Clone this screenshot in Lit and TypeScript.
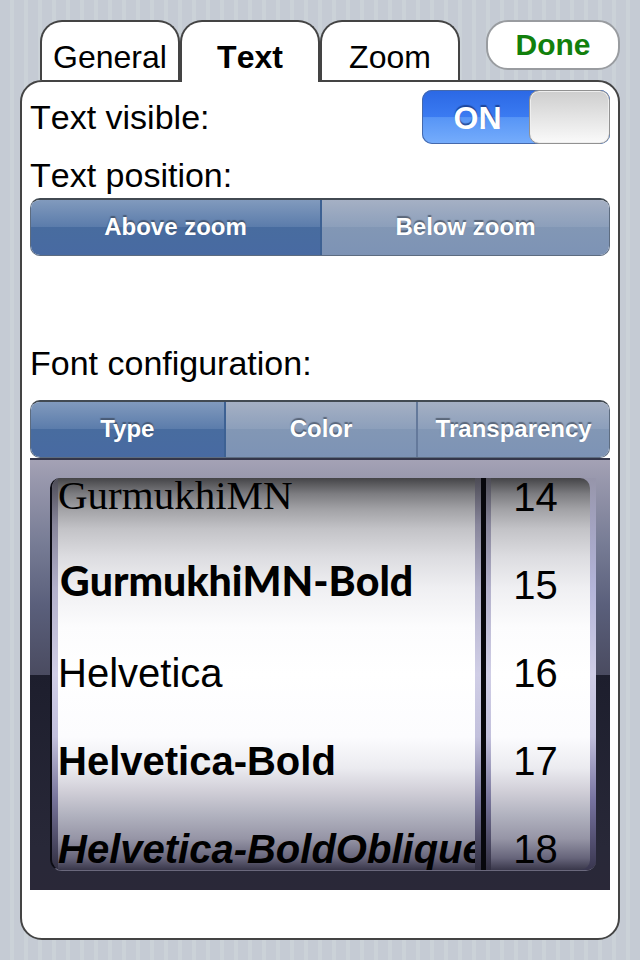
import { LitElement, html, css } from "lit";
import { customElement, state } from "lit/decorators.js";
import { classMap } from "lit/directives/class-map.js";

interface FontChoice {
  name: string;
  face: string;
}

const FONTS: FontChoice[] = [
  { name: "GurmukhiMN", face: "serif" },
  { name: "GurmukhiMN-Bold", face: "humanist" },
  { name: "Helvetica", face: "plain" },
  { name: "Helvetica-Bold", face: "bold" },
  { name: "Helvetica-BoldOblique", face: "oblique" },
];

const SIZES = [14, 15, 16, 17, 18];

@customElement("segmented-control")
class SegmentedControl extends LitElement {
  static properties = {
    label: {},
    options: { attribute: false },
    selected: { type: Number },
  };
  declare label: string;
  declare options: string[];
  declare selected: number;

  constructor() {
    super();
    this.label = "";
    this.options = [];
    this.selected = 0;
  }

  static styles = css`
    :host {
      display: block;
    }
    .bar {
      display: grid;
      grid-auto-flow: column;
      grid-auto-columns: minmax(0, 1fr);
      height: 58px;
      box-sizing: border-box;
      border: 1px solid #5d6c80;
      border-top: 2px solid #424a52;
      border-radius: 10px;
      overflow: hidden;
    }
    .segment {
      border: 0;
      border-left: 2px solid #64799b;
      margin: 0;
      padding: 0 0 2px;
      background: linear-gradient(#a5b0c4, #8c9fbb 49%, #8297b5 50%, #7d93b5);
      color: #fff;
      font: bold 24px "Liberation Sans", Arial, sans-serif;
      text-shadow: 0 -2px 1px rgba(50, 60, 75, 0.6);
    }
    .segment:first-child {
      border-left: 0;
    }
    .segment.on {
      background: linear-gradient(#819abd, #5b7cab 49%, #486c9f 50%, #486aa2);
    }
    .segment.on + .segment {
      border-left-color: #3d6193;
    }
  `;

  render() {
    return html`<div class="bar" role="group" aria-label=${this.label}>
      ${this.options.map(
        (text, i) => html`<button
          class=${classMap({ segment: true, on: i === this.selected })}
          aria-pressed=${i === this.selected}
          @click=${() => (this.selected = i)}
        >${text}</button>`
      )}
    </div>`;
  }
}

@customElement("app-root")
class AppRoot extends LitElement {
  @state() tab = "Text";
  @state() visible = true;

  static styles = css`
    :host {
      display: block;
      font-family: "Liberation Sans", Arial, sans-serif;
      color: #000;
    }
    .page {
      display: flex;
      flex-direction: column;
      box-sizing: border-box;
      min-height: 100vh;
      padding: 20px;
      background: repeating-linear-gradient(
        90deg,
        #c5cbd4 0 10px,
        #cbd2d8 10px 14px
      );
    }
    .header {
      display: flex;
      justify-content: space-between;
      align-items: flex-start;
      padding-left: 20px;
    }
    .tabs {
      display: flex;
    }
    .tab {
      width: 140px;
      height: 60px;
      box-sizing: border-box;
      margin: 0;
      padding: 12px 0 0;
      border: 2px solid #444;
      border-bottom: 0;
      border-radius: 22px 22px 0 0;
      background: #fff;
      color: #000;
      font: 32px "Liberation Sans", Arial, sans-serif;
      font-kerning: none;
    }
    .tab.active {
      position: relative;
      z-index: 1;
      height: 62px;
      margin-bottom: -2px;
      padding-bottom: 2px;
      font-weight: bold;
    }
    .done {
      width: 134px;
      height: 50px;
      box-sizing: border-box;
      padding: 0;
      border: 2px solid #999ca0;
      border-radius: 22px;
      background: #fff;
      color: #12800c;
      font: bold 30px "Liberation Sans", Arial, sans-serif;
    }
    .panel {
      flex: 1;
      box-sizing: border-box;
      padding: 8px;
      border: 2px solid #444;
      border-radius: 22px;
      background: #fff;
      font-kerning: none;
    }
    .row {
      display: flex;
      justify-content: space-between;
      align-items: center;
      margin-bottom: 8px;
      font-size: 34px;
    }
    .caption {
      margin: 0;
      font-size: 34px;
      font-weight: normal;
      line-height: 46px;
    }
    .caption.spaced {
      margin-top: 84px;
      margin-bottom: 14px;
    }
    .switch {
      position: relative;
      display: flex;
      width: 188px;
      height: 54px;
      border-radius: 10px;
      overflow: hidden;
      background: linear-gradient(#2b68e4, #3b7bf2 50%, #5795f6 51%, #76adfc);
      box-shadow: inset 0 0 0 1px #4569ac;
    }
    .switch input {
      position: absolute;
      inset: 0;
      width: 100%;
      height: 100%;
      margin: 0;
      opacity: 0;
    }
    .state {
      flex: 1;
      padding-left: 4px;
      color: #fff;
      font-size: 32px;
      font-weight: bold;
      line-height: 56px;
      text-align: center;
      text-shadow: 0 -2px 1px rgba(20, 50, 120, 0.7);
    }
    .thumb {
      width: 81px;
      box-sizing: border-box;
      border: 1px solid #929292;
      border-radius: 10px;
      background: linear-gradient(#cecece, #fafafa);
      box-shadow: inset 0 0 0 1px #eee;
    }
    .switch.off {
      flex-direction: row-reverse;
      background: #eee;
    }
    .picker {
      padding: 18px 14px 19px 20px;
      border-top: 2px solid #34364a;
      background: linear-gradient(
        #a4a2b5 0,
        #9797ac 5%,
        #767b94 20%,
        #5a5f7b 34%,
        #4a4b60 50%,
        #1d1e2d 50%,
        #282838 90%,
        #2a2838 100%
      );
    }
    .window {
      display: flex;
      height: 392px;
      border-left: 2px solid #0c0c14;
      border-bottom: 1px solid #6a687c;
      border-radius: 10px 0 10px 12px;
      overflow: hidden;
    }
    .reel {
      box-sizing: border-box;
      margin: 0;
      padding: 0 6px;
      border: 0;
      min-width: 0;
      background: linear-gradient(
        #4c4b55 0,
        #88869b 12%,
        #b3b1cb 28%,
        #d0cee6 50%,
        #c2c0dc 66%,
        #77749a 82%,
        #302e40 100%
      );
    }
    .reel.names {
      flex: 1;
    }
    .reel.sizes {
      width: 110px;
      padding-left: 5px;
      background:
        linear-gradient(
            #9695aa 0,
            #a3a3c0 12%,
            #b4b5da 28%,
            #cfcde6 50%,
            #c0bedc 66%,
            #7773a0 82%,
            #39364f 100%
          )
          right / 20px 100% no-repeat,
        linear-gradient(
          #4c4b55 0,
          #88869b 12%,
          #b3b1cb 28%,
          #d0cee6 50%,
          #c2c0dc 66%,
          #77749a 82%,
          #302e40 100%
        );
    }
    .divider {
      width: 5px;
      background: #07070c;
    }
    .drum {
      display: flex;
      flex-direction: column;
      gap: 50px;
      height: 392px;
      overflow: hidden;
      background: linear-gradient(
        #444447 0,
        #7c7c80 4%,
        #a2a2a6 8%,
        #c3c3c7 13%,
        #dcdce0 20%,
        #efeff2 28%,
        #fcfcfd 38%,
        #ffffff 50%,
        #fcfcfe 66%,
        #ebebf0 74%,
        #d0ced7 80%,
        #b1b2bf 86%,
        #9695a6 92%,
        #66647a 97%,
        #39374a 100%
      );
    }
    .names .drum {
      padding-right: 2px;
    }
    .sizes .drum {
      border-radius: 0 10px 10px 0;
    }
    .item {
      display: block;
      flex: none;
      font-size: 40px;
      line-height: 38px;
      white-space: nowrap;
    }
    .item input {
      position: absolute;
      opacity: 0;
      pointer-events: none;
    }
    .sizes .item {
      padding-right: 10px;
      text-align: center;
    }
    .serif {
      font-family: "Liberation Serif", "Times New Roman", serif;
      font-size: 41px;
      line-height: 34px;
      padding-bottom: 4px;
    }
    .humanist {
      padding: 0 2px 8px;
      font-family: Lato, sans-serif;
      font-size: 41px;
      font-weight: 900;
      line-height: 30px;
    }
    .bold {
      font-weight: bold;
    }
    .oblique {
      font-weight: bold;
      font-style: italic;
    }
  `;

  render() {
    return html`
      <main class="page">
        <header class="header">
          <nav class="tabs" role="tablist" aria-label="Settings">
            ${["General", "Text", "Zoom"].map(
              (name) => html`<button
                class=${classMap({ tab: true, active: name === this.tab })}
                role="tab"
                aria-selected=${name === this.tab}
                @click=${() => (this.tab = name)}
              >${name}</button>`
            )}
          </nav>
          <button class="done">Done</button>
        </header>
        <section class="panel">
          <div class="row">
            <label for="visible">Text visible:</label>
            <div class=${classMap({ switch: true, off: !this.visible })}>
              <span class="state">${this.visible ? "ON" : "OFF"}</span>
              <span class="thumb"></span>
              <input
                id="visible"
                type="checkbox"
                role="switch"
                .checked=${this.visible}
                @change=${() => (this.visible = !this.visible)}
              />
            </div>
          </div>
          <h2 class="caption">Text position:</h2>
          <segmented-control
            label="Text position"
            .options=${["Above zoom", "Below zoom"]}
          ></segmented-control>
          <h2 class="caption spaced">Font configuration:</h2>
          <segmented-control
            label="Font configuration"
            .options=${["Type", "Color", "Transparency"]}
          ></segmented-control>
          <div class="picker">
            <div class="window">
              <fieldset class="reel names" aria-label="Font">
                <div class="drum">
                  ${FONTS.map(
                    (f) => html`<label class="item ${f.face}"
                      ><input type="radio" name="font" ?checked=${f.name === "Helvetica"} />${f.name}</label
                    >`
                  )}
                </div>
              </fieldset>
              <div class="divider"></div>
              <fieldset class="reel sizes" aria-label="Size">
                <div class="drum">
                  ${SIZES.map(
                    (n) => html`<label class="item"
                      ><input type="radio" name="size" ?checked=${n === 16} />${n}</label
                    >`
                  )}
                </div>
              </fieldset>
            </div>
          </div>
        </section>
      </main>
    `;
  }
}
